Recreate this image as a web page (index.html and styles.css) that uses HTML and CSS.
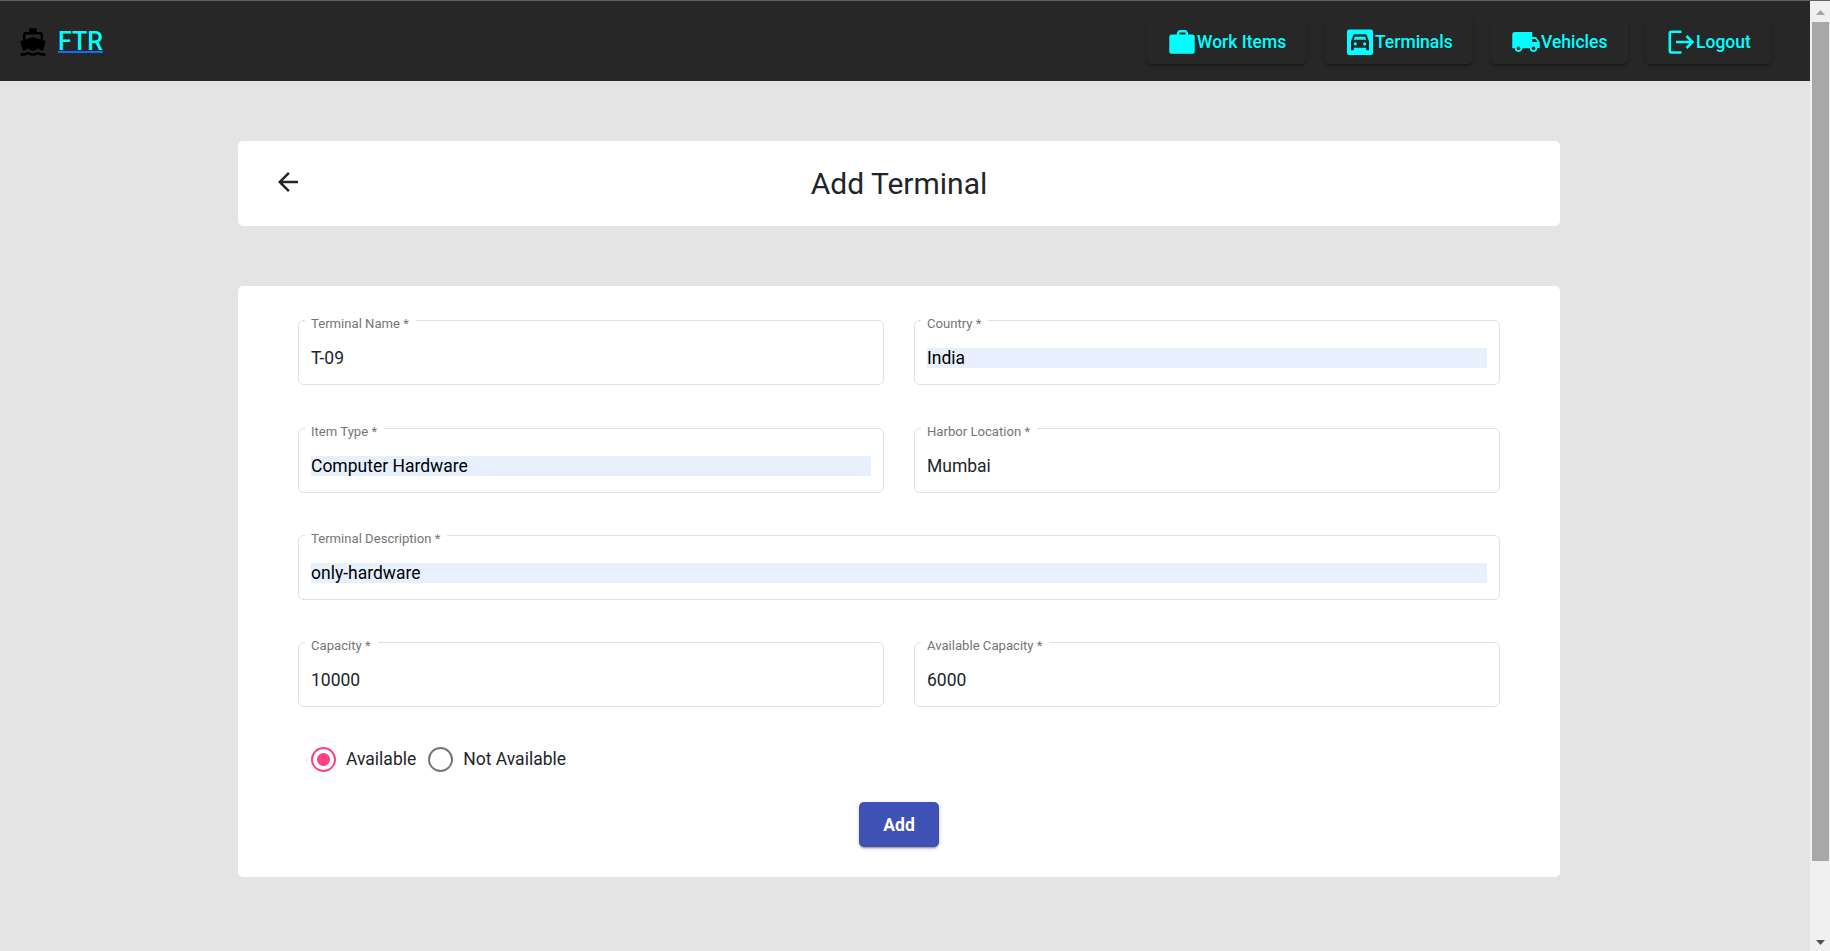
FILE: index.html
```html
<!DOCTYPE html>
<html lang="en">
<head>
<meta charset="utf-8">
<title>FTR</title>
<link rel="stylesheet" href="styles.css">
</head>
<body>
<div class="page">
  <header class="navbar">
    <a class="brand">
      <svg class="icon boat" viewBox="0 0 24 24"><path d="M20 21c-1.39 0-2.78-.47-4-1.32-2.44 1.71-5.56 1.71-8 0C6.78 20.53 5.39 21 4 21H2v2h2c1.38 0 2.74-.35 4-.99 2.52 1.29 5.48 1.29 8 0 1.26.65 2.62.99 4 .99h2v-2h-2zM3.95 19H4c1.6 0 3.02-.88 4-2 .98 1.12 2.4 2 4 2s3.02-.88 4-2c.98 1.12 2.4 2 4 2h.05l1.89-6.68c.08-.26.06-.54-.06-.78s-.34-.42-.6-.5L20 10.62V6c0-1.1-.9-2-2-2h-3V1H9v3H6c-1.1 0-2 .9-2 2v4.62l-1.29.42c-.26.08-.48.26-.6.5s-.15.52-.06.78L3.95 19zM6 6h12v3.97L12 8 6 9.97V6z"/></svg>
      <span class="brand-name">FTR</span>
    </a>
    <nav class="menu">
      <button class="nav-btn work"><svg class="icon" viewBox="0 0 30 30"><path fill-rule="evenodd" d="M4.5 7.5H10V5.500L12 3h7l2 2.500V7.500h4.500a2.200 2.200 0 0 1 2.200 2.200V24.500a2.200 2.200 0 0 1-2.200 2.200H4.500a2.200 2.200 0 0 1-2.200-2.200V9.700a2.200 2.200 0 0 1 2.200-2.200zM12.500 5.500V7.500h6V5.500z"/></svg><span>Work Items</span></button>
      <button class="nav-btn terminals"><svg class="icon" viewBox="0 0 30 30"><path fill-rule="evenodd" d="M4 2.500H26a2 2 0 0 1 2 2V26a2 2 0 0 1-2 2H4a2 2 0 0 1-2-2V4.500a2 2 0 0 1 2-2zM9.500 7.200Q8.600 7.200 8.200 8.200L6 14.500V23.200H8.800V20.800H21.200V23.200H24V14.500L21.800 8.200Q21.400 7.200 20.500 7.200zM9.800 9.700H20.200L21.200 12.700H8.800zM10.300 15.300a1.600 1.600 0 1 1 0 3.200a1.600 1.600 0 1 1 0-3.200zM19.700 15.300a1.600 1.600 0 1 1 0 3.200a1.600 1.600 0 1 1 0-3.200z"/></svg><span>Terminals</span></button>
      <button class="nav-btn vehicles"><svg class="icon" viewBox="0 0 24 24"><path d="M20 8h-3V4H3c-1.100 0-2 .9-2 2v11h2c0 1.660 1.340 3 3 3s3-1.340 3-3h6c0 1.660 1.340 3 3 3s3-1.340 3-3h2v-5l-3-4zM6 18.500c-.83 0-1.500-.67-1.500-1.500s.67-1.500 1.500-1.500 1.500.67 1.500 1.500-.67 1.500-1.500 1.500zm13.500-9l1.960 2.500H17V9.500h2.500zm-1.500 9c-.83 0-1.500-.67-1.500-1.500s.67-1.500 1.500-1.500 1.500.67 1.500 1.500-.67 1.500-1.500 1.500z"/></svg><span>Vehicles</span></button>
      <button class="nav-btn logout"><svg class="icon line" viewBox="0 0 30 30"><path d="M15.500 4.700H5.200a1.400 1.400 0 0 0-1.400 1.400V24a1.400 1.400 0 0 0 1.400 1.400H15.500M10 15H27M20.500 9L26.500 15L20.500 21"/></svg><span>Logout</span></button>
    </nav>
  </header>
  <main class="content">
    <section class="card title-card">
      <svg class="icon back" viewBox="0 0 24 24"><path d="M20 11H7.830l5.590-5.590L12 4l-8 8 8 8 1.410-1.410L7.830 13H20v-2z"/></svg>
      <h1 class="title">Add Terminal</h1>
    </section>
    <form class="card form-card">
      <div class="fields">
        <div class="field"><label class="label">Terminal Name *</label><div class="value">T-09</div></div>
        <div class="field"><label class="label">Country *</label><div class="value filled">India</div></div>
        <div class="field"><label class="label">Item Type *</label><div class="value filled">Computer Hardware</div></div>
        <div class="field"><label class="label">Harbor Location *</label><div class="value">Mumbai</div></div>
        <div class="field wide"><label class="label">Terminal Description *</label><div class="value filled">only-hardware</div></div>
        <div class="field"><label class="label">Capacity *</label><div class="value">10000</div></div>
        <div class="field"><label class="label">Available Capacity *</label><div class="value">6000</div></div>
      </div>
      <div class="radios">
        <label class="radio"><span class="ring checked"></span>Available</label>
        <label class="radio"><span class="ring"></span>Not Available</label>
      </div>
      <button class="submit">Add</button>
    </form>
  </main>
</div>
<aside class="scrollbar">
  <svg class="arrow up" viewBox="0 0 9 5"><path d="M4.500 0L9 5H0z"/></svg>
  <div class="thumb"></div>
  <svg class="arrow down" viewBox="0 0 9 5"><path d="M0 0H9L4.500 5z"/></svg>
</aside>
</body>
</html>
```
FILE: styles.css
```css
* { box-sizing: border-box; }
body {
  margin: 0;
  height: 951px;
  overflow: hidden;
  display: flex;
  background: #e4e4e4;
  border-top: 1px solid #5f6368;
  font-family: Roboto, "Liberation Sans", sans-serif;
  font-size: 17.5px;
  color: #212529;
}
.page { width: 1810px; }
.icon { width: 30px; height: 30px; fill: currentColor; flex: none; display: block; }
.navbar {
  height: 80px;
  background: #272727;
  display: flex;
  justify-content: space-between;
  align-items: center;
  padding: 0 39px 0 18px;
}
.brand { display: flex; align-items: center; gap: 10px; color: #000; }
.boat { margin-top: 2px; }
.brand-name {
  padding-top: 2px;
  font-size: 25px;
  font-weight: 500;
  line-height: 30px;
  color: cyan;
  text-decoration: underline;
  text-decoration-color: #0d6efd;
  text-decoration-thickness: 2px;
}
.menu { display: flex; gap: 18px; }
.nav-btn {
  height: 46px;
  padding: 0 0 0 20px;
  border: 0;
  border-radius: 5px;
  background: #272727;
  color: cyan;
  font: 500 17.5px/44px Roboto, sans-serif;
  display: flex;
  align-items: center;
  box-shadow: 0 3px 1px -2px rgba(0,0,0,.2), 0 2px 2px rgba(0,0,0,.14), 0 1px 5px rgba(0,0,0,.12);
}
.nav-btn .icon { margin-top: 2px; }
.nav-btn span { padding-top: 2px; }
.work { width: 159px; margin-right: 1px; }
.terminals { width: 148px; }
.vehicles { width: 137px; }
.logout { width: 125px; }
.line { fill: none; stroke: currentColor; stroke-width: 2.5; }
.content {
  padding: 60px 250px 0 238px;
  display: flex;
  flex-direction: column;
  gap: 60px;
}
.card { background: #fff; border-radius: 5px; }
.title-card { height: 85px; display: flex; align-items: center; padding: 0 35px; }
.back { margin-top: -4px; }
.title { flex: 1; margin: 0 30px 0 0; font-size: 30px; font-weight: 400; text-align: center; line-height: 40px; }
.form-card { height: 591px; padding: 34.2px 60px 0; display: flex; flex-direction: column; }
.fields { display: grid; grid-template-columns: 1fr 1fr; column-gap: 30px; row-gap: 42.36px; }
.field {
  position: relative;
  height: 65px;
  border: 1px solid #e0e0e0;
  border-radius: 6px;
  padding: 27px 12px 0;
}
.wide { grid-column: 1 / -1; }
.label {
  position: absolute;
  left: 6px;
  top: -6px;
  padding: 0 7px 0 6px;
  background: #fff;
  font-size: 13.125px;
  line-height: 18px;
  color: #757575;
}
.value { height: 20px; line-height: 20px; }
.filled { background: #e8f0fe; color: #000; }
.radios { display: flex; gap: 12px; margin: 39.7px 0 0 13px; }
.radio { display: flex; align-items: center; gap: 10px; height: 25px; }
.ring { width: 25px; height: 25px; border: 2px solid #757575; border-radius: 50%; }
.checked { border-color: #ff4081; background: radial-gradient(circle, #ff4081 6px, transparent 6.800px); }
.submit {
  align-self: center;
  width: 80px;
  height: 45px;
  margin-top: 30px;
  border: 0;
  border-radius: 5px;
  background: #3f51b5;
  color: #fff;
  font: 700 17.5px/45px Roboto, sans-serif;
  padding: 1px 0 0;
  box-shadow: 0 3px 1px -2px rgba(0,0,0,.2), 0 2px 2px rgba(0,0,0,.14), 0 1px 5px rgba(0,0,0,.12);
}
.scrollbar { width: 20px; background: #f0f0f0; display: flex; flex-direction: column; align-items: center; padding: 9px 0 6px; }
.arrow { width: 9px; height: 5px; fill: #505050; }
.up { fill: #a3a3a3; }
.thumb { width: 17px; height: 839px; margin: 7px 0 auto 1px; background: #a8a8a8; }
```
